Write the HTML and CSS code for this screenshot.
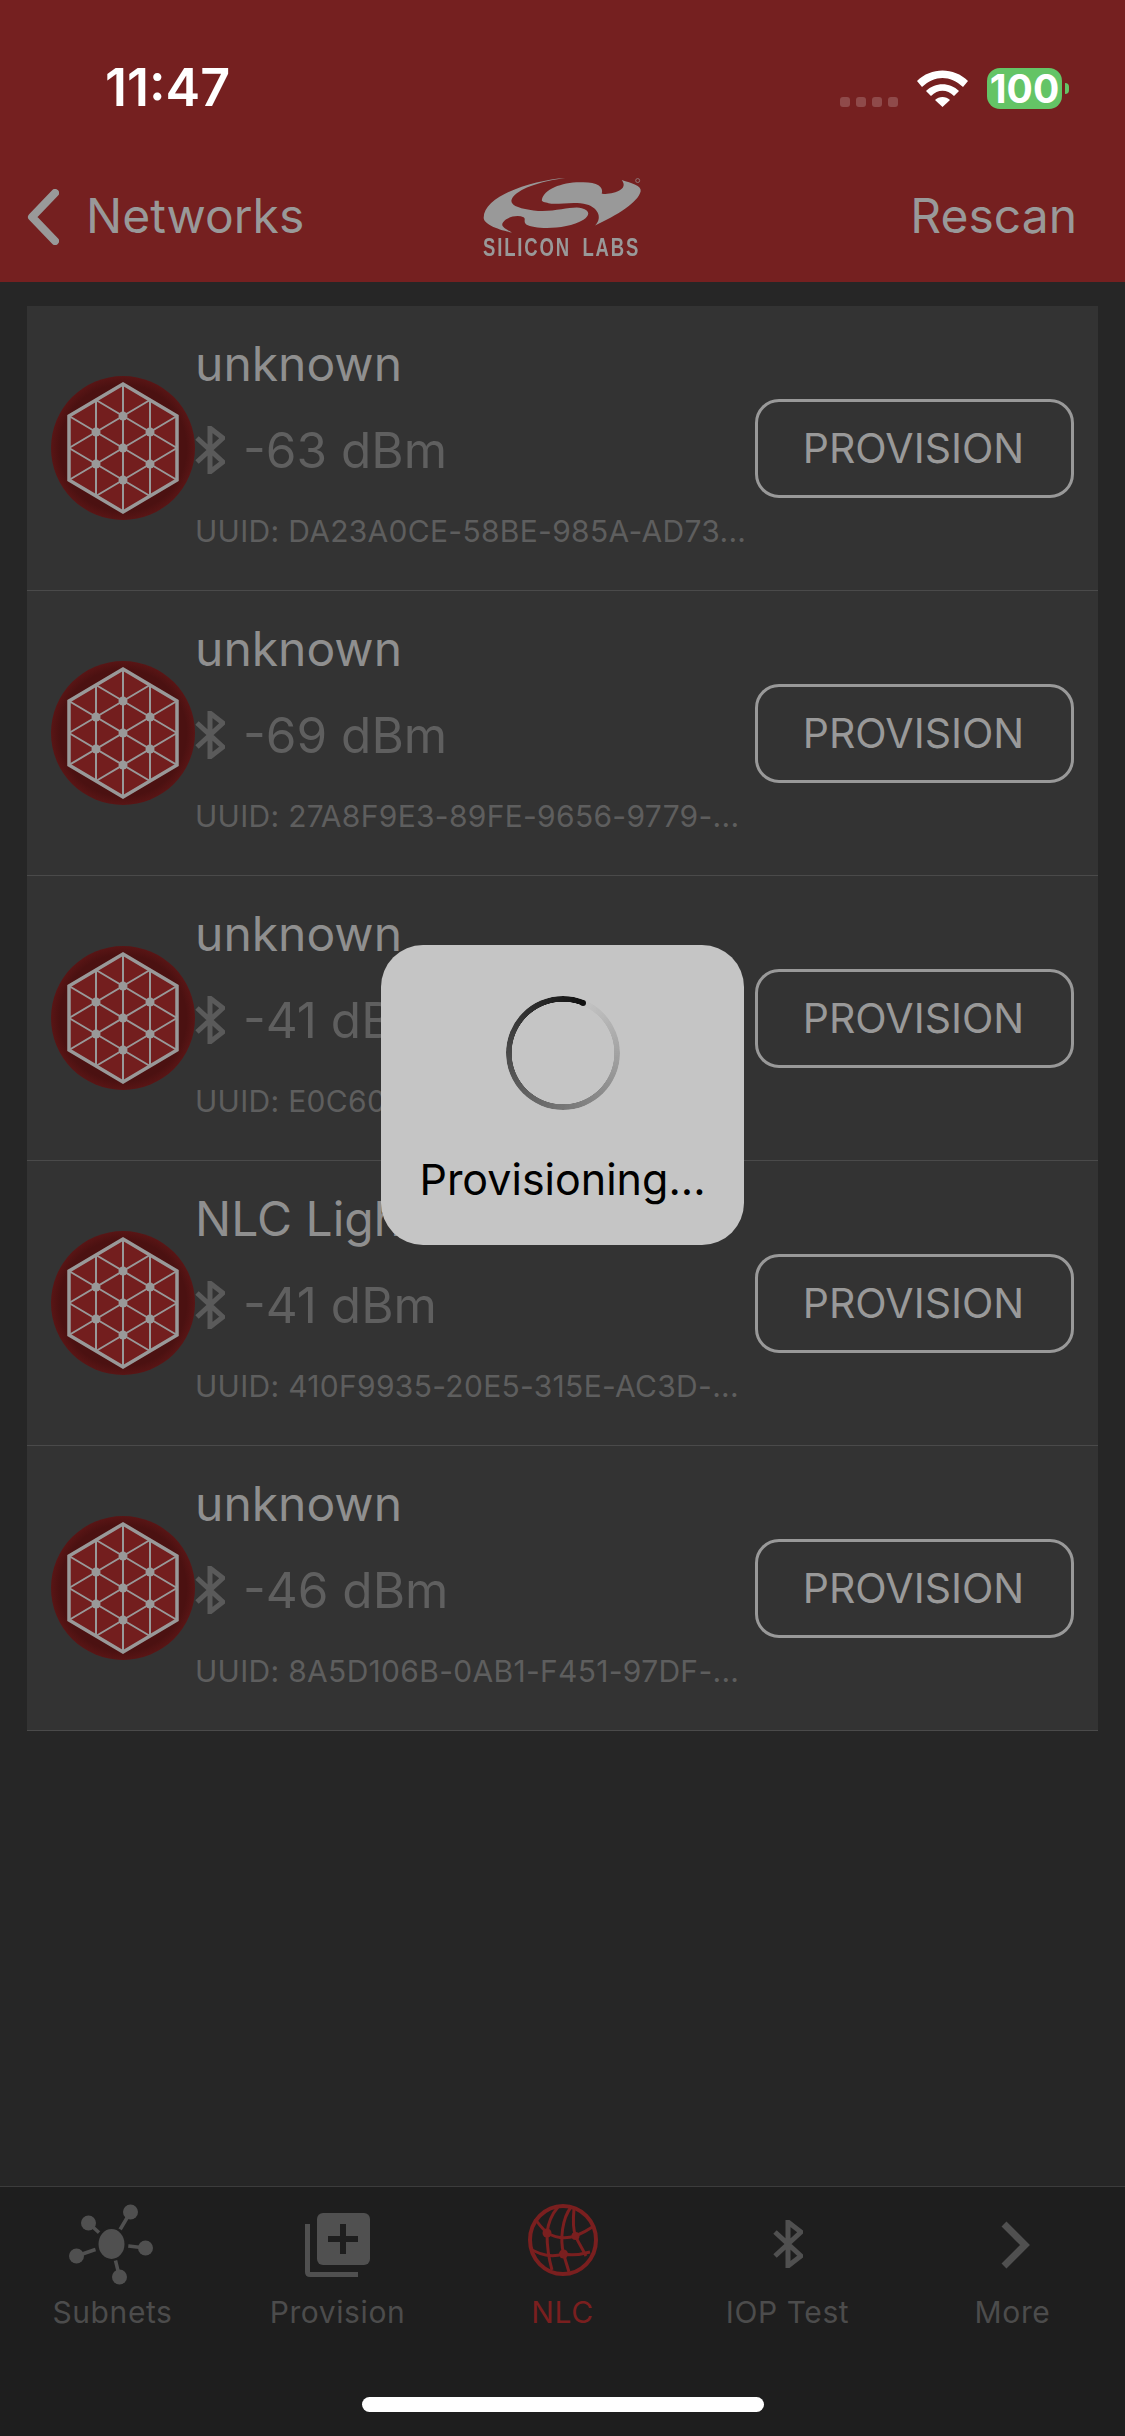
FILE: index.html
```html
<!DOCTYPE html>
<html lang="en">
<head>
  <meta charset="UTF-8">
  <title>Networks</title>
  <link rel="stylesheet" href="styles.css">
</head>
<body>
  <svg class="defs" width="0" height="0">
    <defs>
      <radialGradient id="meshbg">
        <stop offset="0.88" stop-color="#4b1111"/>
        <stop offset="1" stop-color="#591515"/>
      </radialGradient>
    </defs>
    <symbol id="bt" viewBox="0 0 30 48">
      <path d="M2 12 L28 36 L15 46 V2 L28 12 L2 36" fill="none" stroke="currentColor" stroke-width="5"/>
    </symbol>
    <symbol id="mesh" viewBox="0 0 144 144">
      <circle cx="72" cy="72" r="72" fill="url(#meshbg)"/>
      <path d="M72 8 L126 40 V104 L72 136 L18 104 V40 Z" fill="#731e1e"/>
      <g fill="none" stroke="#999" stroke-width="2">
        <path d="M72 8 L126 40 V104 L72 136 L18 104 V40 Z" stroke-width="3.5"/>
        <path d="M45 24 V120 M72 8 V136 M99 24 V120"/>
        <path d="M18 40 L126 104 M18 72 L99 120 M45 24 L126 72"/>
        <path d="M126 40 L18 104 M126 72 L45 120 M99 24 L18 72"/>
      </g>
      <g fill="#999">
        <circle cx="72" cy="40" r="4.5"/><circle cx="45" cy="56" r="4.5"/><circle cx="99" cy="56" r="4.5"/>
        <circle cx="72" cy="72" r="4.5"/><circle cx="45" cy="88" r="4.5"/><circle cx="99" cy="88" r="4.5"/>
        <circle cx="72" cy="104" r="4.5"/>
      </g>
    </symbol>
  </svg>

  <header class="header">
    <div class="status-bar">
      <span class="time">11:47</span>
      <div class="status-icons">
        <div class="dots"><i></i><i></i><i></i><i></i></div>
        <svg class="wifi" width="51" height="37" viewBox="0 0 51 37" fill="#fff">
          <path d="M0 11 C14 -3 37 -3 51 11 L46 17 C33 5 18 5 5 17Z"/>
          <path d="M9 21 C18 12 33 12 42 21 L37 26 C30 19 21 19 14 26Z"/>
          <path d="M18 30 C22 26 29 26 33 30 L25.500 37Z"/>
        </svg>
        <div class="battery">100</div>
        <div class="battery-cap"></div>
      </div>
    </div>
    <nav class="nav-bar">
      <div class="nav-left">
        <svg class="back" width="32" height="56" viewBox="0 0 32 56">
          <path d="M28 4 L5 28 L28 52" fill="none" stroke="#999" stroke-width="8" stroke-linecap="round" stroke-linejoin="round"/>
        </svg>
        <span>Networks</span>
      </div>
      <div class="logo">
        <svg width="159" height="57" viewBox="128 50 478 170" fill="#999">
          <path d="M375 52 C280 58 130 105 130 172 C130 190 170 208 215 216 C195 205 180 198 188 186 C198 170 230 162 250 170 C258 175 248 183 258 192 C285 208 380 208 430 178 C450 165 450 150 425 143 C395 135 340 158 280 150 C240 145 205 135 215 115 C230 85 300 62 375 52Z"/>
          <path d="M305 118 C310 85 370 62 430 65 C470 65 492 78 485 100 C510 102 570 90 545 58 C575 68 605 75 602 92 C595 125 530 165 465 195 C490 170 470 140 440 132 C400 120 350 135 325 128 C315 125 303 125 305 118Z"/>
          <circle cx="593" cy="60" r="6" fill="none" stroke="#999" stroke-width="2"/>
        </svg>
        <div class="logo-text">SILICON LABS</div>
      </div>
      <div class="nav-right">Rescan</div>
    </nav>
  </header>

  <main class="list">
    <div class="cell">
      <svg class="mesh" width="144" height="144"><use href="#mesh"/></svg>
      <div class="info">
        <div class="name">unknown</div>
        <div class="rssi"><svg class="bt" width="30" height="48"><use href="#bt"/></svg><span>-63 dBm</span></div>
        <div class="uuid">UUID: DA23A0CE-58BE-985A-AD73...</div>
      </div>
      <button class="provision">PROVISION</button>
    </div>
    <div class="cell">
      <svg class="mesh" width="144" height="144"><use href="#mesh"/></svg>
      <div class="info">
        <div class="name">unknown</div>
        <div class="rssi"><svg class="bt" width="30" height="48"><use href="#bt"/></svg><span>-69 dBm</span></div>
        <div class="uuid">UUID: 27A8F9E3-89FE-9656-9779-...</div>
      </div>
      <button class="provision">PROVISION</button>
    </div>
    <div class="cell">
      <svg class="mesh" width="144" height="144"><use href="#mesh"/></svg>
      <div class="info">
        <div class="name">unknown</div>
        <div class="rssi"><svg class="bt" width="30" height="48"><use href="#bt"/></svg><span>-41 dBm</span></div>
        <div class="uuid">UUID: E0C60</div>
      </div>
      <button class="provision">PROVISION</button>
    </div>
    <div class="cell">
      <svg class="mesh" width="144" height="144"><use href="#mesh"/></svg>
      <div class="info">
        <div class="name">NLC Light</div>
        <div class="rssi"><svg class="bt" width="30" height="48"><use href="#bt"/></svg><span>-41 dBm</span></div>
        <div class="uuid">UUID: 410F9935-20E5-315E-AC3D-...</div>
      </div>
      <button class="provision">PROVISION</button>
    </div>
    <div class="cell">
      <svg class="mesh" width="144" height="144"><use href="#mesh"/></svg>
      <div class="info">
        <div class="name">unknown</div>
        <div class="rssi"><svg class="bt" width="30" height="48"><use href="#bt"/></svg><span>-46 dBm</span></div>
        <div class="uuid">UUID: 8A5D106B-0AB1-F451-97DF-...</div>
      </div>
      <button class="provision">PROVISION</button>
    </div>
  </main>

  <div class="hud">
    <div class="spinner"><div class="ring"></div><div class="cap"></div></div>
    <div class="hud-label">Provisioning...</div>
  </div>

  <footer class="tab-bar">
    <div class="tabs">
      <div class="tab">
        <svg class="tab-icon" width="90" height="84" viewBox="1.500 0 90 84" fill="#505050" stroke="#505050">
          <path d="M45 43 L64 11 M45 43 L22 22 M45 43 L79 47 M45 43 L10 55 M45 43 L53 76" stroke-width="3.500"/>
          <circle cx="45" cy="43" r="17" fill="#1e1e1e" stroke="none"/>
          <ellipse cx="45" cy="43" rx="13" ry="15" stroke="none"/>
          <circle cx="64" cy="11" r="7.500" stroke="none"/>
          <circle cx="22" cy="22" r="7.500" stroke="none"/>
          <circle cx="79" cy="47" r="7.500" stroke="none"/>
          <circle cx="10" cy="55" r="7.500" stroke="none"/>
          <circle cx="53" cy="76" r="7.500" stroke="none"/>
        </svg>
        <span>Subnets</span>
      </div>
      <div class="tab">
        <svg class="tab-icon" width="90" height="84" viewBox="4 0 90 84" fill="#505050">
          <rect x="28" y="12" width="53" height="52" rx="6"/>
          <path d="M16 23 H21 V71 H69 V76 H21 Q16 76 16 71Z"/>
          <path d="M51 23 H57 V35 H69 V41 H57 V53 H51 V41 H39 V35 H51Z" fill="#1e1e1e"/>
        </svg>
        <span>Provision</span>
      </div>
      <div class="tab active">
        <svg class="tab-icon" width="90" height="84" viewBox="-10 -3 90 84" fill="none" stroke="#7a1f1f" stroke-width="3">
          <ellipse cx="35" cy="36" rx="33" ry="34" stroke-width="4"/>
          <path d="M30 3 C24 10 20 20 19 29 C19 42 20 52 24 66"/>
          <path d="M43 3 C34 15 32 35 35.500 50 L41 68"/>
          <path d="M46 5 C45 15 45 25 47.500 32 C50 38 53 42 58 52"/>
          <path d="M7 15 C12 22 16 26 19 29 C28 34 38 35 47.500 32 C55 29 60 26 66 22"/>
          <path d="M4 46 C12 50 22 54 35.500 50 C45 52 55 50 62 48"/>
          <g fill="#7a1f1f" stroke="none">
            <circle cx="19" cy="29" r="4.500"/><circle cx="47.500" cy="32" r="4"/><circle cx="35.500" cy="50" r="4.500"/>
          </g>
        </svg>
        <span>NLC</span>
      </div>
      <div class="tab">
        <div class="tab-icon tab-glyph"><svg class="bt-tab" width="30" height="48"><use href="#bt"/></svg></div>
        <span>IOP Test</span>
      </div>
      <div class="tab">
        <svg class="tab-icon" width="90" height="84" viewBox="0 0 90 84">
          <path d="M36 23 L57 44 L36 65" fill="none" stroke="#505050" stroke-width="7"/>
        </svg>
        <span>More</span>
      </div>
    </div>
    <div class="home-bar"></div>
  </footer>
</body>
</html>
```

FILE: styles.css
```css
* {
  box-sizing: border-box;
}
html, body {
  margin: 0;
  padding: 0;
}
body {
  position: relative;
  width: 1125px;
  height: 2436px;
  overflow: hidden;
  display: flex;
  flex-direction: column;
  background-color: #262626;
  font-family: Inter, "Noto Sans", sans-serif;
}
.defs {
  position: absolute;
}

/* header */
.header {
  height: 282px;
  flex: none;
  background-color: #752020;
  color: #999;
}
.status-bar {
  height: 156px;
  display: flex;
  justify-content: space-between;
  align-items: flex-start;
  padding: 56px 56px 0 105px;
}
.time {
  font-size: 52px;
  line-height: 64px;
  font-weight: 600;
  color: #fff;
}
.status-icons {
  display: flex;
  align-items: flex-start;
  padding-top: 12px;
}
.dots {
  display: flex;
  gap: 6px;
  margin-top: 29px;
  margin-right: 19px;
}
.dots i {
  width: 10px;
  height: 10px;
  border-radius: 3px;
  background-color: #8f4a4a;
}
.wifi {
  margin-top: 2px;
  margin-right: 19px;
}
.battery {
  width: 75px;
  height: 41px;
  border-radius: 13px;
  background-color: #64c466;
  color: #fff;
  font-size: 39px;
  font-weight: 700;
  line-height: 41px;
  text-align: center;
}
.battery-cap {
  width: 4px;
  height: 11px;
  margin-top: 15px;
  margin-left: 3px;
  border-radius: 0 6px 6px 0;
  background-color: #64c466;
}
.nav-bar {
  height: 126px;
  display: grid;
  grid-template-columns: 1fr 159px 1fr;
  align-items: flex-start;
  font-size: 48px;
  line-height: 60px;
  padding: 0 48px;
}
.nav-left {
  display: flex;
  align-items: flex-start;
  gap: 27px;
  padding-top: 30px;
  margin-left: -21px;
}
.back {
  margin-top: 3px;
}
.nav-right {
  text-align: right;
  padding-top: 30px;
}
.logo {
  width: 159px;
  padding-top: 21px;
}
.logo svg {
  display: block;
}
.logo-text {
  margin-top: 2px;
  font-family: "Liberation Sans", sans-serif;
  font-size: 25px;
  font-weight: 700;
  line-height: 22px;
  letter-spacing: 2.5px;
  word-spacing: 6px;
  white-space: nowrap;
  color: #999;
  transform: scaleX(0.74);
  transform-origin: left center;
}

/* list */
.list {
  flex: 1;
  padding: 24px 27px 0;
}
.cell {
  height: 285px;
  display: flex;
  align-items: center;
  padding: 0 24px;
  background-color: #333;
  border-bottom: 1px solid #4a4a4a;
}
.mesh {
  flex: none;
}
.info {
  flex: 1;
  align-self: flex-start;
  padding-top: 28px;
  min-width: 0;
}
.name {
  font-size: 48px;
  line-height: 60px;
  color: #8f8f8f;
  white-space: nowrap;
}
.rssi {
  display: flex;
  align-items: center;
  gap: 18px;
  margin-top: 26px;
  font-size: 49.5px;
  line-height: 60px;
  color: #5f5f5f;
}
.bt {
  color: #5a5a5a;
}
.uuid {
  margin-top: 31px;
  font-size: 30px;
  line-height: 40px;
  letter-spacing: 0.3px;
  color: #5e5e5e;
  white-space: nowrap;
}
.provision {
  flex: none;
  width: 319px;
  height: 99px;
  border: 3px solid #999;
  border-radius: 24px;
  background: transparent;
  color: #999;
  font-family: inherit;
  font-size: 41px;
  padding: 0 2px 0 0;
}

/* progress hud */
.hud {
  position: absolute;
  left: 381px;
  top: 945px;
  width: 363px;
  height: 300px;
  border-radius: 42px;
  background-color: #c5c5c5;
  display: flex;
  flex-direction: column;
  align-items: center;
  padding-top: 51px;
}
.spinner {
  position: relative;
  width: 114px;
  height: 114px;
}
.ring {
  width: 114px;
  height: 114px;
  border-radius: 50%;
  background: conic-gradient(from 22deg, rgba(17,17,17,0) 0%, #111 100%);
  -webkit-mask: radial-gradient(farthest-side, transparent calc(100% - 6px), #000 calc(100% - 5.5px));
  mask: radial-gradient(farthest-side, transparent calc(100% - 6px), #000 calc(100% - 5.5px));
}
.cap {
  position: absolute;
  left: 74px;
  top: 4px;
  width: 6px;
  height: 6px;
  border-radius: 50%;
  background-color: #111;
}
.hud-label {
  margin-top: 41px;
  font-size: 43px;
  line-height: 56px;
  color: #000;
  white-space: nowrap;
}

/* tab bar */
.tab-bar {
  flex: none;
  height: 250px;
  background-color: #1e1e1e;
  border-top: 1px solid #3c3c3c;
  position: relative;
}
.tabs {
  display: grid;
  grid-template-columns: repeat(5, 225px);
}
.tab {
  display: flex;
  flex-direction: column;
  align-items: center;
  padding-top: 14px;
  color: #4c4c4c;
  font-size: 30px;
  line-height: 36px;
  letter-spacing: 0.6px;
}
.tab.active {
  color: #7a1f1f;
}
.tab-icon {
  height: 84px;
  margin-bottom: 9px;
}
.tab-glyph {
  width: 90px;
  display: flex;
  justify-content: center;
  align-items: flex-start;
  padding-top: 19px;
}
.bt-tab {
  color: #505050;
}
.home-bar {
  position: absolute;
  left: 362px;
  top: 210px;
  width: 402px;
  height: 15px;
  border-radius: 8px;
  background-color: #fff;
}
```
